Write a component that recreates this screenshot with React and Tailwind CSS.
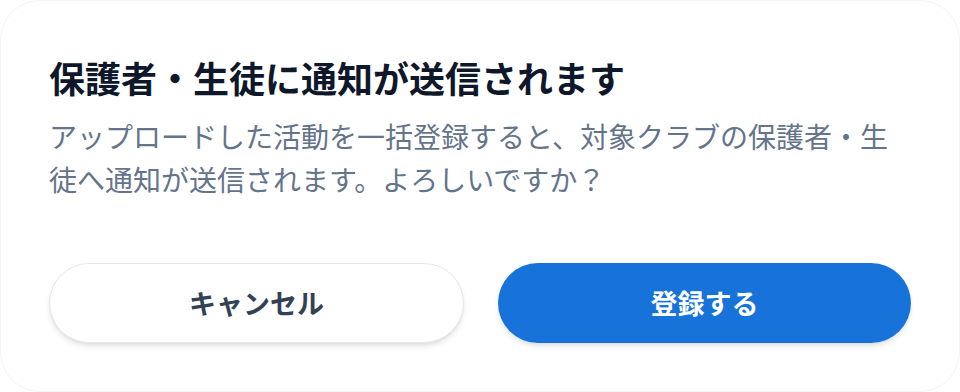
import React from 'react';

const App = () => {
  return (
    <div
      className="w-[960px] h-[392px] bg-white"
      style={{ fontFamily: '"Noto Sans CJK JP", "Noto Sans", sans-serif' }}
    >
      <div className="h-full rounded-[40px] border border-gray-100 bg-white px-12 pt-[52px] flex flex-col">
        <h2 className="text-[36px] leading-[48px] font-bold text-[#0f172a]">
          保護者・生徒に通知が送信されます
        </h2>
        <p className="mt-[14px] text-[28px] leading-[43px] text-[#64748b]">
          アップロードした活動を一括登録すると、対象クラブの保護者・生徒へ通知が送信されます。よろしいですか？
        </p>
        <div className="mt-[62px] flex gap-[34px]">
          <button className="flex-1 h-[80px] rounded-full bg-white border border-gray-200 shadow-md text-[27px] font-bold text-[#334155]">
            キャンセル
          </button>
          <button className="flex-1 h-[80px] rounded-full bg-[#1773da] shadow-md text-[27px] font-bold text-white">
            登録する
          </button>
        </div>
      </div>
    </div>
  );
};

export default App;
